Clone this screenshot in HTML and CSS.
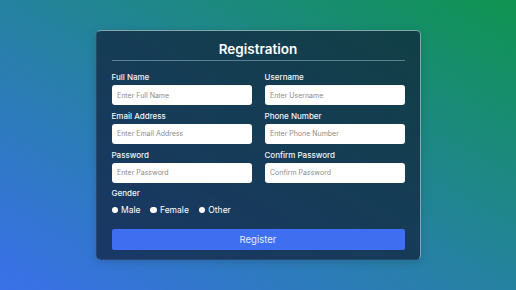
FILE: index.html
```html
<!DOCTYPE html>
<html lang="en">
<head>
<meta charset="utf-8">
<title>Registration</title>
<link rel="stylesheet" href="styles.css">
</head>
<body>
<main class="page">
  <form class="card">
    <h1 class="title">Registration</h1>
    <div class="grid">
      <div class="field">
        <label class="label">Full Name</label>
        <input class="input" type="text" placeholder="Enter Full Name">
      </div>
      <div class="field">
        <label class="label">Username</label>
        <input class="input" type="text" placeholder="Enter Username">
      </div>
      <div class="field">
        <label class="label">Email Address</label>
        <input class="input" type="text" placeholder="Enter Email Address">
      </div>
      <div class="field">
        <label class="label">Phone Number</label>
        <input class="input" type="text" placeholder="Enter Phone Number">
      </div>
      <div class="field">
        <label class="label">Password</label>
        <input class="input" type="password" placeholder="Enter Password">
      </div>
      <div class="field">
        <label class="label">Confirm Password</label>
        <input class="input" type="password" placeholder="Confirm Password">
      </div>
    </div>
    <div class="gender">
      <div class="label">Gender</div>
      <div class="radios">
        <label class="radio"><input type="radio" name="g" class="dot"><span>Male</span></label>
        <label class="radio"><input type="radio" name="g" class="dot"><span>Female</span></label>
        <label class="radio"><input type="radio" name="g" class="dot"><span>Other</span></label>
      </div>
    </div>
    <button class="btn" type="button">Register</button>
  </form>
</main>
</body>
</html>
```

FILE: styles.css
```css
* { box-sizing: border-box; }
html, body { margin: 0; padding: 0; }
body {
  width: 516px;
  height: 290px;
  overflow: hidden;
  font-family: Inter, "Noto Sans", sans-serif;
  background: linear-gradient(to top right, #3a70ea 0%, #2582a0 50%, #0f9450 100%);
}
.page {
  height: 290px;
  display: flex;
  align-items: center;
  justify-content: center;
}
.card {
  width: 325px;
  height: 229.3px;
  padding: 0 15px 8.6px;
  border-radius: 5px;
  background: rgba(15, 30, 55, 0.7);
  border: 1px solid rgba(255, 255, 255, 0.08);
  border-top-color: rgba(220, 255, 250, 0.55);
  border-right-color: rgba(220, 255, 250, 0.55);
  box-shadow: 0 2px 10px rgba(0, 0, 0, 0.15);
  display: flex;
  flex-direction: column;
}
.title {
  margin: 0;
  padding: 9px 0 1px;
  line-height: 19px;
  font-size: 13.5px;
  font-weight: 600;
  color: #ffffff;
  text-align: center;
  border-bottom: 1px solid rgba(200, 230, 240, 0.4);
}
.grid {
  margin-top: 10px;
  display: grid;
  grid-template-columns: 140px 140px;
  justify-content: space-between;
  row-gap: 4.6px;
}
.field {
  display: flex;
  flex-direction: column;
}
.label {
  display: block;
  font-size: 8px;
  line-height: 12px;
  font-weight: 500;
  color: #f2f5f8;
}
.input {
  margin-top: 2px;
  height: 20px;
  width: 140px;
  border: none;
  border-radius: 3px;
  background: #ffffff;
  padding: 0 5.5px;
  font-family: inherit;
  font-size: 7px;
  outline: none;
}
.input::placeholder { color: #8c8c8c; }
.gender { margin-top: 4.8px; }
.radios {
  margin-top: 3.7px;
  height: 14px;
  display: flex;
  align-items: center;
  gap: 10px;
}
.radio {
  display: flex;
  align-items: center;
  gap: 3px;
  font-size: 8.5px;
  line-height: 14px;
  color: #ffffff;
}
.dot {
  appearance: none;
  -webkit-appearance: none;
  margin: 0;
  width: 6.5px;
  height: 6.5px;
  border-radius: 50%;
  background: #ffffff;
}
.btn {
  margin-top: 11.6px;
  height: 21.4px;
  width: 100%;
  border: none;
  border-radius: 2px;
  background: #3f6ff0;
  color: #e6ecff;
  font-family: inherit;
  font-size: 9.5px;
  padding: 0;
}
```
